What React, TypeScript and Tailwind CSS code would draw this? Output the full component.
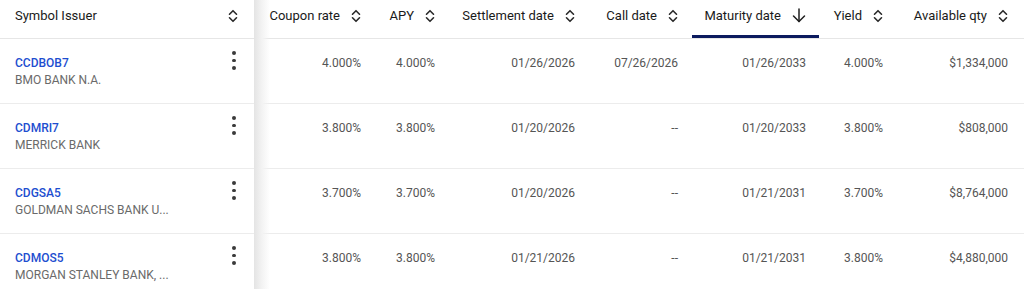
import React from "react";

type Row = {
  symbol: string;
  issuer: string;
  coupon: string;
  apy: string;
  settle: string;
  call: string;
  maturity: string;
  yld: string;
  qty: string;
};

const rows: Row[] = [
  { symbol: "CCDBOB7", issuer: "BMO BANK N.A.", coupon: "4.000%", apy: "4.000%", settle: "01/26/2026", call: "07/26/2026", maturity: "01/26/2033", yld: "4.000%", qty: "$1,334,000" },
  { symbol: "CDMRI7", issuer: "MERRICK BANK", coupon: "3.800%", apy: "3.800%", settle: "01/20/2026", call: "--", maturity: "01/20/2033", yld: "3.800%", qty: "$808,000" },
  { symbol: "CDGSA5", issuer: "GOLDMAN SACHS BANK U...", coupon: "3.700%", apy: "3.700%", settle: "01/20/2026", call: "--", maturity: "01/21/2031", yld: "3.700%", qty: "$8,764,000" },
  { symbol: "CDMOS5", issuer: "MORGAN STANLEY BANK, ...", coupon: "3.800%", apy: "3.800%", settle: "01/21/2026", call: "--", maturity: "01/21/2031", yld: "3.800%", qty: "$4,880,000" },
];

function SortIcon() {
  return (
    <svg width="10" height="14" viewBox="0 0 10 14" fill="none" className="shrink-0">
      <path d="M1.5 5.2 L5 1.7 L8.5 5.2" stroke="#2a2a2a" strokeWidth="1.6" strokeLinecap="round" strokeLinejoin="round" />
      <path d="M1.5 8.8 L5 12.3 L8.5 8.8" stroke="#2a2a2a" strokeWidth="1.6" strokeLinecap="round" strokeLinejoin="round" />
    </svg>
  );
}

function ArrowDown() {
  return (
    <svg width="14" height="15" viewBox="0 0 14 15" fill="none" className="shrink-0">
      <path d="M7 1 L7 13.5" stroke="#1f1f1f" strokeWidth="1.5" strokeLinecap="round" />
      <path d="M1.5 8 L7 13.5 L12.5 8" stroke="#1f1f1f" strokeWidth="1.5" strokeLinecap="round" strokeLinejoin="round" />
    </svg>
  );
}

function Kebab() {
  return (
    <div className="flex flex-col items-center gap-[4px] w-[4px]">
      <span className="block w-[3.5px] h-[3.5px] rounded-full bg-[#3a3a3a]" />
      <span className="block w-[3.5px] h-[3.5px] rounded-full bg-[#3a3a3a]" />
      <span className="block w-[3.5px] h-[3.5px] rounded-full bg-[#3a3a3a]" />
    </div>
  );
}

type Col = { key: keyof Row; label: string; w: string; pr: string; sorted?: boolean };

const cols: Col[] = [
  { key: "coupon", label: "Coupon rate", w: "w-[121px]", pr: "pr-[14px]" },
  { key: "apy", label: "APY", w: "w-[74px]", pr: "pr-[14px]" },
  { key: "settle", label: "Settlement date", w: "w-[140px]", pr: "pr-[14px]" },
  { key: "call", label: "Call date", w: "w-[103px]", pr: "pr-[14px]" },
  { key: "maturity", label: "Maturity date", w: "w-[127px]", pr: "pr-[13px]", sorted: true },
  { key: "yld", label: "Yield", w: "w-[78px]", pr: "pr-[14px]" },
  { key: "qty", label: "Available qty", w: "w-[127px]", pr: "pr-[16px]" },
];

export default function App() {
  return (
    <div
      className="w-[1024px] h-[289px] overflow-hidden bg-white flex"
      style={{ fontFamily: "Roboto, 'Liberation Sans', sans-serif" }}
    >
      {/* Sticky first column */}
      <div className="relative z-10 w-[254px] shrink-0 bg-white">
        <div className="h-[39px] border-b border-[#e6e6e6] pt-[7px] pl-[15px] pr-[16px]">
          <div className="h-[17px] flex items-center justify-between">
            <span className="text-[13px] leading-[17px] text-[#1a1a1a]">Symbol Issuer</span>
            <SortIcon />
          </div>
        </div>
        {rows.map((r) => (
          <div key={r.symbol} className="h-[65px] border-b border-[#ececec] pl-[15px] pr-[16px] pt-[16px] flex justify-between">
            <div className="flex flex-col gap-[1px]">
              <span className="text-[12px] leading-[16px] font-medium text-[#1d4ed0]">{r.symbol}</span>
              <span className="text-[12px] leading-[16px] text-[#6a6a6a]">{r.issuer}</span>
            </div>
            <div className="pr-[2px] -mt-[4px]">
              <Kebab />
            </div>
          </div>
        ))}
        <div className="absolute top-0 bottom-0 left-full w-[16px] bg-gradient-to-r from-[#e4e4e4] via-[#f3f3f3] to-transparent pointer-events-none" />
      </div>

      {/* Scrollable columns */}
      <div className="flex">
        {cols.map((c) => (
          <div key={c.key} className={`${c.w} shrink-0`}>
            <div className={`relative h-[39px] border-b border-[#e6e6e6] pt-[7px] ${c.pr}`}>
              <div className="h-[17px] flex items-center justify-end gap-[11px]">
                <span className="text-[13px] leading-[17px] text-[#1a1a1a] whitespace-nowrap">{c.label}</span>
                {c.sorted ? <ArrowDown /> : <SortIcon />}
              </div>
              {c.sorted && <div className="absolute left-0 right-0 bottom-0 h-[3px] bg-[#0b1a5e]" />}
            </div>
            {rows.map((r) => (
              <div key={r.symbol} className={`h-[65px] border-b border-[#ececec] pt-[16px] ${c.pr} text-right text-[12px] leading-[16px] text-[#555555] whitespace-nowrap`}>
                {r[c.key]}
              </div>
            ))}
          </div>
        ))}
      </div>
    </div>
  );
}
